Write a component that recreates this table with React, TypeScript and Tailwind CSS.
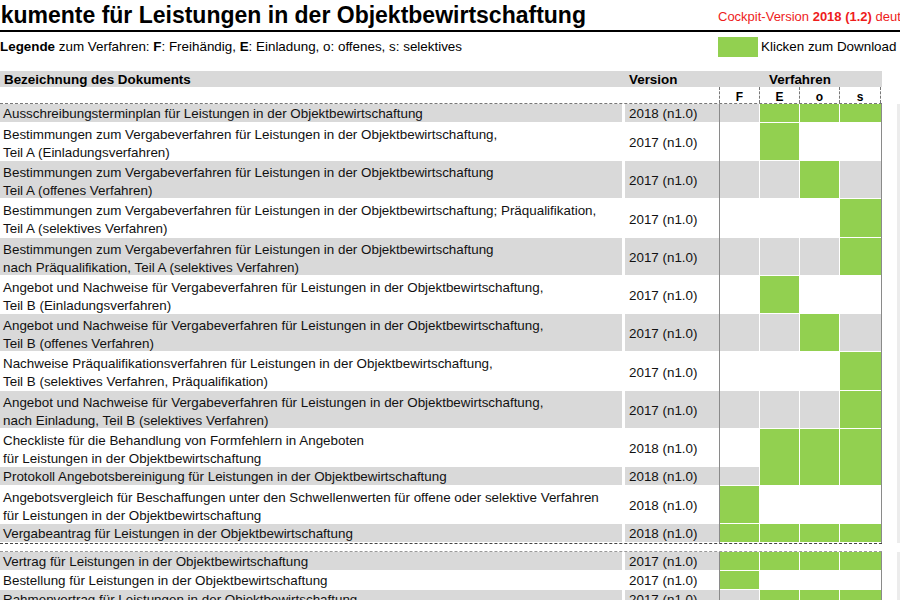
import React from "react";

type Doc = {
    lines: string[];
    version: string;
    marks: boolean[];
    joinNext?: boolean[];
    tall?: boolean;
};

const block1: Doc[] = [
    { lines: ["Ausschreibungsterminplan für Leistungen in der Objektbewirtschaftung"], version: "2018 (n1.0)", marks: [false, true, true, true] },
    { lines: ["Bestimmungen zum Vergabeverfahren für Leistungen in der Objektbewirtschaftung,", "Teil A (Einladungsverfahren)"], version: "2017 (n1.0)", marks: [false, true, false, false] },
    { lines: ["Bestimmungen zum Vergabeverfahren für Leistungen in der Objektbewirtschaftung", "Teil A (offenes Verfahren)"], version: "2017 (n1.0)", marks: [false, false, true, false] },
    { lines: ["Bestimmungen zum Vergabeverfahren für Leistungen in der Objektbewirtschaftung; Präqualifikation,", "Teil A (selektives Verfahren)"], version: "2017 (n1.0)", marks: [false, false, false, true], tall: true },
    { lines: ["Bestimmungen zum Vergabeverfahren für Leistungen in der Objektbewirtschaftung", "nach Präqualifikation, Teil A (selektives Verfahren)"], version: "2017 (n1.0)", marks: [false, false, false, true] },
    { lines: ["Angebot und Nachweise für Vergabeverfahren für Leistungen in der Objektbewirtschaftung,", "Teil B (Einladungsverfahren)"], version: "2017 (n1.0)", marks: [false, true, false, false] },
    { lines: ["Angebot und Nachweise für Vergabeverfahren für Leistungen in der Objektbewirtschaftung,", "Teil B (offenes Verfahren)"], version: "2017 (n1.0)", marks: [false, false, true, false] },
    { lines: ["Nachweise Präqualifikationsverfahren für Leistungen in der Objektbewirtschaftung,", "Teil B (selektives Verfahren, Präqualifikation)"], version: "2017 (n1.0)", marks: [false, false, false, true], tall: true },
    { lines: ["Angebot und Nachweise für Vergabeverfahren für Leistungen in der Objektbewirtschaftung,", "nach Einladung, Teil B (selektives Verfahren)"], version: "2017 (n1.0)", marks: [false, false, false, true] },
    { lines: ["Checkliste für die Behandlung von Formfehlern in Angeboten", "für Leistungen in der Objektbewirtschaftung"], version: "2018 (n1.0)", marks: [false, true, true, true], joinNext: [false, true, true, true] },
    { lines: ["Protokoll Angebotsbereinigung für Leistungen in der Objektbewirtschaftung"], version: "2018 (n1.0)", marks: [false, true, true, true] },
    { lines: ["Angebotsvergleich für Beschaffungen unter den Schwellenwerten für offene oder selektive Verfahren", "für Leistungen in der Objektbewirtschaftung"], version: "2018 (n1.0)", marks: [true, false, false, false] },
    { lines: ["Vergabeantrag für Leistungen in der Objektbewirtschaftung"], version: "2018 (n1.0)", marks: [true, true, true, true] },
];

const block2: Doc[] = [
    { lines: ["Vertrag für Leistungen in der Objektbewirtschaftung"], version: "2017 (n1.0)", marks: [true, true, true, true] },
    { lines: ["Bestellung für Leistungen in der Objektbewirtschaftung"], version: "2017 (n1.0)", marks: [true, false, false, false] },
    { lines: ["Rahmenvertrag für Leistungen in der Objektbewirtschaftung"], version: "2017 (n1.0)", marks: [false, true, true, true] },
];

const widths = ["w-[40px]", "w-[40px]", "w-[40px]", "w-[41px]"];

const Row: React.FC<{ doc: Doc; shade: boolean }> = ({ doc, shade }) => {
    const double = doc.lines.length > 1;
    const h = double ? (doc.tall ? "h-[39px]" : "h-[38px]") : "h-[19px]";
    const bg = shade ? "bg-[#d9d9d9]" : "bg-white";
    // excel cells sit a little low, nudge text down
    const nudge = double ? "translate-y-[2px]" : "translate-y-[1px]";
    return (
        <div className={`flex ${h}`}>
            <div className={`w-[622px] ${bg} border-b border-white px-[3px] flex flex-col justify-center leading-[18px] whitespace-nowrap`}>
                {doc.lines.map((l, i) => (
                    <span key={i} className={nudge}>{l}</span>
                ))}
            </div>
            <div className={`ml-[3px] w-[94px] ${bg} border-b border-white pl-[4px] flex items-center`}>
                <span className={nudge}>{doc.version}</span>
            </div>
            <div className="w-px bg-[#8a8a8a]" />
            {doc.marks.map((m, i) => {
                const join = doc.joinNext?.[i];
                return (
                    <div
                        key={i}
                        className={`${widths[i]} ${m ? "bg-[#92d050]" : bg} ${join ? "" : "border-b"} ${i < 3 ? "border-r" : ""} border-white`}
                    />
                );
            })}
            <div className="w-px bg-[#8a8a8a]" />
        </div>
    );
};

const Block: React.FC<{ docs: Doc[] }> = ({ docs }) => (
    <div className="flex">
        <div className="w-[882px]">
            {docs.map((d, i) => (
                <Row key={i} doc={d} shade={i % 2 === 0} />
            ))}
        </div>
        <div className="ml-[15px] w-[3px] bg-[#ececec]" />
    </div>
);

export default function App() {
    return (
        <div className="w-[900px] h-[600px] overflow-hidden bg-white text-[13.4px] text-[#111] font-['Liberation_Sans',Arial,sans-serif]">
            {/* Title */}
            <div className="h-[32px] border-b-2 border-black flex items-center whitespace-nowrap overflow-hidden">
                <h1 className="-ml-[30px] w-[748px] shrink-0 text-[23px] font-bold text-black leading-none">
                    Dokumente für Leistungen in der Objektbewirtschaftung
                </h1>
                <span className="mt-[4px] text-[13px] text-[#ee1c1c]">
                    Cockpit-Version <b>2018 (1.2)</b> deutsch
                </span>
            </div>

            {/* Legend */}
            <div className="h-[39px] pt-[5px] flex items-start whitespace-nowrap">
                <div className="w-[718px] h-[20px] flex items-center text-black">
                    <span>
                        <b>Legende</b> zum Verfahren: <b>F</b>: Freihändig, <b>E</b>: Einladung, o: offenes, s: selektives
                    </span>
                </div>
                <div className="w-[40px] h-[20px] bg-[#92d050]" />
                <span className="ml-[3px] h-[20px] flex items-center text-black">Klicken zum Download</span>
            </div>

            {/* Header */}
            <div className="w-[882px] h-[16px] bg-[#d9d9d9] flex items-center font-bold text-black">
                <div className="w-[629px] pl-[4px] translate-y-[1px]">Bezeichnung des Dokuments</div>
                <div className="w-[90px] translate-y-[1px]">Version</div>
                <div className="w-[162px] text-center translate-y-[1px]">Verfahren</div>
            </div>
            <div className="w-[882px] h-[17px] flex border-b border-dashed border-[#777] font-bold text-black text-[12px]">
                <div className="w-[719px]" />
                {["F", "E", "o", "s"].map((c, i) => (
                    <div
                        key={c}
                        className={`${i === 3 ? "w-[41px]" : "w-[40px]"} border-l border-dashed border-[#777] flex items-center justify-center leading-none pt-[3px]`}
                    >
                        {c}
                    </div>
                ))}
                <div className="w-px border-l border-dashed border-[#777]" />
            </div>

            <Block docs={block1} />
            <div className="w-[882px] h-[9px] border-t border-[#444] border-b border-b-[#999] border-dashed" />
            <Block docs={block2} />
        </div>
    );
}
